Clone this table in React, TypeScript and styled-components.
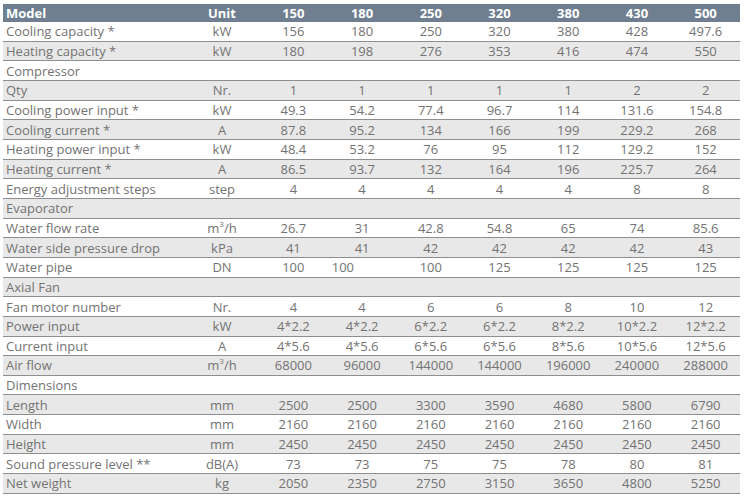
import React from "react";
import styled, { createGlobalStyle } from "styled-components";

const Global = createGlobalStyle`
  html, body { margin: 0; padding: 0; background: #ffffff; }
  body { font-family: "Open Sans", "Noto Sans", sans-serif; }
`;

const Table = styled.div`
  width: 737px;
  margin: 4px 0 0 3px;
  display: flex;
  flex-direction: column;
`;

const cols = "182px 74px repeat(7, 1fr)";

const HeaderRow = styled.div`
  display: grid;
  grid-template-columns: ${cols};
  height: 18px;
  background: #707f8f;
  color: #ffffff;
  font-weight: 700;
  font-size: 13px;
  align-items: center;
`;

const Row = styled.div<{ $shade: boolean }>`
  display: grid;
  grid-template-columns: ${cols};
  height: 19.667px;
  box-sizing: border-box;
  border-bottom: 1px solid #8e8e8e;
  background: ${(p) => (p.$shade ? "#e8e8e8" : "#ffffff")};
  color: #737373;
  font-size: 13px;
  align-items: center;
`;

const Label = styled.div`
  padding-left: 3px;
  white-space: nowrap;
  line-height: 18px;
`;

const Cell = styled.div<{ $left?: boolean }>`
  text-align: ${(p) => (p.$left ? "left" : "center")};
  padding-left: ${(p) => (p.$left ? "4px" : "0")};
  white-space: nowrap;
  line-height: 18px;
`;

const Sup = styled.sup`
  font-size: 8px;
  vertical-align: 6px;
  line-height: 0;
`;

type RowData = {
  label: string;
  unit?: React.ReactNode;
  values?: string[];
  leftIdx?: number[];
};

const m3h = (
  <>
    m<Sup>3</Sup>/h
  </>
);

const rows: RowData[] = [
  { label: "Cooling capacity *", unit: "kW", values: ["156", "180", "250", "320", "380", "428", "497.6"] },
  { label: "Heating capacity *", unit: "kW", values: ["180", "198", "276", "353", "416", "474", "550"] },
  { label: "Compressor" },
  { label: "Qty", unit: "Nr.", values: ["1", "1", "1", "1", "1", "2", "2"] },
  { label: "Cooling power input *", unit: "kW", values: ["49.3", "54.2", "77.4", "96.7", "114", "131.6", "154.8"] },
  { label: "Cooling current *", unit: "A", values: ["87.8", "95.2", "134", "166", "199", "229.2", "268"] },
  { label: "Heating power input *", unit: "kW", values: ["48.4", "53.2", "76", "95", "112", "129.2", "152"] },
  { label: "Heating current *", unit: "A", values: ["86.5", "93.7", "132", "164", "196", "225.7", "264"] },
  { label: "Energy adjustment steps", unit: "step", values: ["4", "4", "4", "4", "4", "8", "8"] },
  { label: "Evaporator" },
  { label: "Water flow rate", unit: m3h, values: ["26.7", "31", "42.8", "54.8", "65", "74", "85.6"] },
  { label: "Water side pressure drop", unit: "kPa", values: ["41", "41", "42", "42", "42", "42", "43"] },
  { label: "Water pipe", unit: "DN", values: ["100", "100", "100", "125", "125", "125", "125"], leftIdx: [1] },
  { label: "Axial Fan" },
  { label: "Fan motor number", unit: "Nr.", values: ["4", "4", "6", "6", "8", "10", "12"] },
  { label: "Power input", unit: "kW", values: ["4*2.2", "4*2.2", "6*2.2", "6*2.2", "8*2.2", "10*2.2", "12*2.2"] },
  { label: "Current input", unit: "A", values: ["4*5.6", "4*5.6", "6*5.6", "6*5.6", "8*5.6", "10*5.6", "12*5.6"] },
  { label: "Air flow", unit: m3h, values: ["68000", "96000", "144000", "144000", "196000", "240000", "288000"] },
  { label: "Dimensions" },
  { label: "Length", unit: "mm", values: ["2500", "2500", "3300", "3590", "4680", "5800", "6790"] },
  { label: "Width", unit: "mm", values: ["2160", "2160", "2160", "2160", "2160", "2160", "2160"] },
  { label: "Height", unit: "mm", values: ["2450", "2450", "2450", "2450", "2450", "2450", "2450"] },
  { label: "Sound pressure level **", unit: "dB(A)", values: ["73", "73", "75", "75", "78", "80", "81"] },
  { label: "Net weight", unit: "kg", values: ["2050", "2350", "2750", "3150", "3650", "4800", "5250"] },
];

const models = ["150", "180", "250", "320", "380", "430", "500"];

export default function App() {
  return (
    <>
      <Global />
      <Table>
        <HeaderRow>
          <Label>Model</Label>
          <Cell>Unit</Cell>
          {models.map((m) => (
            <Cell key={m}>{m}</Cell>
          ))}
        </HeaderRow>
        {rows.map((r, i) => (
          <Row key={r.label} $shade={i % 2 === 1}>
            <Label>{r.label}</Label>
            <Cell>{r.unit}</Cell>
            {(r.values ?? []).map((v, j) => (
              <Cell key={j} $left={r.leftIdx?.includes(j)}>
                {v}
              </Cell>
            ))}
          </Row>
        ))}
      </Table>
    </>
  );
}
